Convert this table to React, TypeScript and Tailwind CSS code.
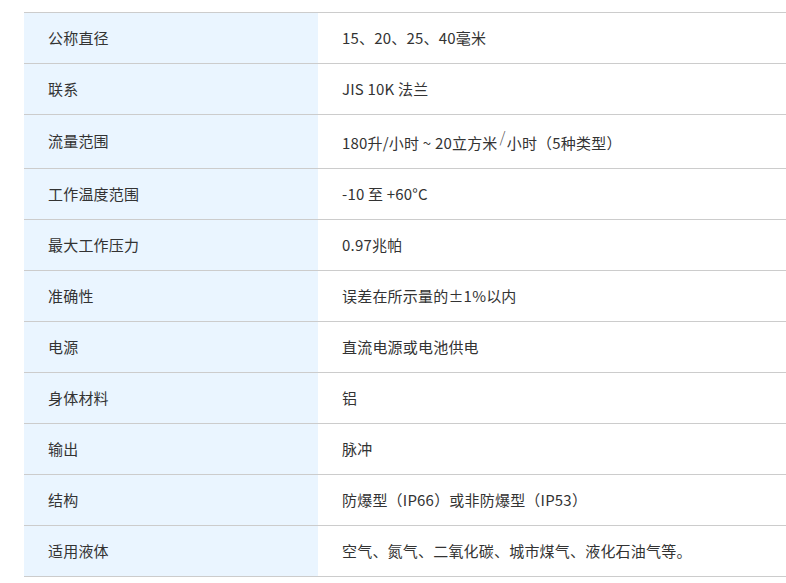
import React from "react";

const rows: { k: string; v: React.ReactNode; h?: string; pad?: string }[] = [
  { k: "公称直径", v: "15、20、25、40毫米" },
  { k: "联系", v: "JIS 10K 法兰" },
  {
    k: "流量范围",
    v: (
      <>
        180升/小时 ~ 20立方米
        <span className="relative -top-[6px] ml-[2px] mr-[1px] text-[15px] font-light text-[#555555]">/</span>
        小时（5种类型）
      </>
    ),
    h: "h-[54px]",
    pad: "pt-[3px]",
  },
  { k: "工作温度范围", v: "-10 至 +60°C" },
  { k: "最大工作压力", v: "0.97兆帕" },
  { k: "准确性", v: "误差在所示量的±1%以内" },
  { k: "电源", v: "直流电源或电池供电" },
  { k: "身体材料", v: "铝" },
  { k: "输出", v: "脉冲" },
  { k: "结构", v: "防爆型（IP66）或非防爆型（IP53）" },
  { k: "适用液体", v: "空气、氮气、二氧化碳、城市煤气、液化石油气等。" },
];

export default function App() {
  return (
    <div
      className="bg-white w-[786px] h-[583px] overflow-hidden pt-[12px] pl-[24px] text-[15px] tracking-[0.2px] text-[#333333]"
      style={{ fontFamily: '"Noto Sans CJK SC", "Noto Sans", sans-serif' }}
    >
      <div className="w-[762px] border-b border-[#cccccc]">
        {rows.map((r, i) => (
          <div key={i} className={`flex border-t border-[#cccccc] ${r.h ?? "h-[51px]"}`}>
            <div className="w-[294px] bg-[#eaf5ff] flex items-center px-[24px]">{r.k}</div>
            <div className={`flex-1 flex items-center px-[24px] ${r.pad ?? ""}`}>
              <span>{r.v}</span>
            </div>
          </div>
        ))}
      </div>
    </div>
  );
}
